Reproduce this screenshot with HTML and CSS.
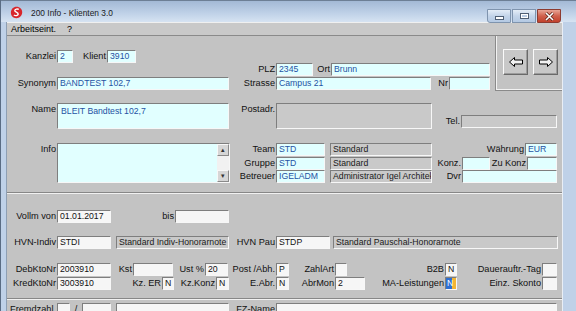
FILE: index.html
```html
<!DOCTYPE html>
<html>
<head>
<meta charset="utf-8">
<title>200 Info - Klienten 3.0</title>
<link rel="stylesheet" href="styles.css">
</head>
<body>
<div class="window">

	<div class="titlebar">
		<svg class="app-icon" width="13" height="13" viewBox="0 0 13 13">
			<path d="M6.5 0.8 C10 0.8 12.4 3.2 12.2 6.6 C12 10 9.4 12.3 6.3 12.2 C3 12.1 0.8 9.8 0.9 6.5 C1 3.2 3.3 0.8 6.5 0.8 Z" fill="#d8262c"/>
			<path d="M8.8 3.4 C7.4 2.6 5 3 4.8 4.6 C4.6 6.2 8.4 6.2 8.2 8.2 C8 9.8 5.4 10.1 3.9 9" fill="none" stroke="#fff" stroke-width="1.4"/>
		</svg>
		<span class="title">200 Info - Klienten 3.0</span>
		<div class="caption-btns">
			<span class="cbtn min"><i></i></span>
			<span class="cbtn max"><i></i></span>
			<span class="cbtn close">
				<svg width="11" height="9" viewBox="0 0 11 9"><path d="M2 1 L9 8 M9 1 L2 8" stroke="#5a2318" stroke-width="3"/><path d="M2 1 L9 8 M9 1 L2 8" stroke="#fff" stroke-width="1.6"/></svg>
			</span>
		</div>
	</div>

	<div class="client">
		<div class="menubar">
			<span>Arbeitseint.</span>
			<span>?</span>
		</div>

		<div class="form">

			<div class="top">
				<div class="top-fields">
					<div class="row">
						<span class="lbl w50">Kanzlei</span>
						<span class="fld cyan w16">2</span>
						<span class="lbl w34">Klient</span>
						<span class="fld cyan w29">3910</span>
					</div>
					<div class="row">
						<span class="lbl w269">PLZ</span>
						<span class="fld cyan w37">2345</span>
						<span class="lbl w18">Ort</span>
						<span class="fld cyan w159">Brunn</span>
					</div>
					<div class="row gap1">
						<span class="lbl w50">Synonym</span>
						<span class="fld cyan w172">BANDTEST 102,7</span>
						<span class="lbl w47">Strasse</span>
						<span class="fld cyan w155">Campus 21</span>
						<span class="lbl w18">Nr</span>
						<span class="fld cyan w41"></span>
					</div>
				</div>
				<div class="nav">
					<span class="nav-btn">
						<svg width="14" height="10" viewBox="0 0 14 10"><path d="M0.5 5 L5.5 0.5 L5.5 3 L13.5 3 L13.5 7 L5.5 7 L5.5 9.5 Z" fill="#f2f2f2" stroke="#000"/></svg>
					</span>
					<span class="nav-btn">
						<svg width="14" height="10" viewBox="0 0 14 10"><path d="M13.5 5 L8.5 0.5 L8.5 3 L0.5 3 L0.5 7 L8.5 7 L8.5 9.5 Z" fill="#f2f2f2" stroke="#000"/></svg>
					</span>
				</div>
			</div>

			<div class="row tall">
				<span class="lbl w50">Name</span>
				<span class="fld cyan w172 big">BLEIT Bandtest 102,7</span>
				<span class="lbl w47">Postadr.</span>
				<span class="fld gray w156 big"></span>
				<span class="lbl w29 low">Tel.</span>
				<span class="fld gray w96 low"></span>
			</div>

			<div class="row info-row">
				<span class="lbl w50">Info</span>
				<div class="fld cyan w173 memo">
					<div class="memo-text"></div>
					<div class="scroll">
						<span class="sbtn">&#9652;</span>
						<span class="track"></span>
						<span class="sbtn">&#9662;</span>
					</div>
				</div>
				<div class="stack">
					<div class="row">
						<span class="lbl w46">Team</span>
						<span class="fld cyan w49">STD</span>
						<span class="fld gray w102 ml5">Standard</span>
						<span class="lbl w93">Währung</span>
						<span class="fld cyan w32">EUR</span>
					</div>
					<div class="row">
						<span class="lbl w46">Gruppe</span>
						<span class="fld cyan w49">STD</span>
						<span class="fld gray w102 ml5">Standard</span>
						<span class="lbl w30">Konz.</span>
						<span class="fld cyan w28"></span>
						<span class="lbl w37">Zu Konz</span>
						<span class="fld cyan w30"></span>
					</div>
					<div class="row">
						<span class="lbl w46">Betreuer</span>
						<span class="fld cyan w49">IGELADM</span>
						<span class="fld gray w102 ml5">Administrator Igel Architekten</span>
						<span class="lbl w30">Dvr</span>
						<span class="fld cyan w95"></span>
					</div>
				</div>
			</div>

			<div class="sep"></div>

			<div class="row vollm">
				<span class="lbl w50">Vollm von</span>
				<span class="fld white w54">01.01.2017</span>
				<span class="lbl w64">bis</span>
				<span class="fld white w54"></span>
			</div>

			<div class="row hvn">
				<span class="lbl w50">HVN-Indiv</span>
				<span class="fld white w54">STDI</span>
				<span class="fld gray w113 ml5">Standard Indiv-Honorarnote</span>
				<span class="lbl w47">HVN Pau</span>
				<span class="fld white w54">STDP</span>
				<span class="fld gray w225 ml3">Standard Pauschal-Honorarnote</span>
			</div>

			<div class="row konto">
				<span class="lbl w50">DebKtoNr</span>
				<span class="fld white w54">2003910</span>
				<span class="lbl w22">Kst</span>
				<span class="fld white w40"></span>
				<span class="lbl w32">Ust %</span>
				<span class="fld white w23">20</span>
				<span class="lbl w48">Post /Abh.</span>
				<span class="fld white w13">P</span>
				<span class="lbl w46">ZahlArt</span>
				<span class="fld white w12"></span>
				<span class="lbl w98">B2B</span>
				<span class="fld white w12">N</span>
				<span class="lbl w85">Dauerauftr.-Tag</span>
				<span class="fld white w15"></span>
			</div>

			<div class="row gap1">
				<span class="lbl w50">KredKtoNr</span>
				<span class="fld white w54">3003910</span>
				<span class="lbl w51">Kz. ER</span>
				<span class="fld white w12">N</span>
				<span class="lbl w42">Kz.Konz</span>
				<span class="fld white w13">N</span>
				<span class="lbl w47">E.Abr.</span>
				<span class="fld white w13">N</span>
				<span class="lbl w46">AbrMon</span>
				<span class="fld white w30">2</span>
				<span class="lbl w80">MA-Leistungen</span>
				<span class="fld sel w12">N</span>
				<span class="lbl w85">Einz. Skonto</span>
				<span class="fld white w15"></span>
			</div>

			<div class="sep sep-low"></div>

			<div class="row fremd">
				<span class="lbl w50">Fremdzahl.</span>
				<span class="fld white w13"></span>
				<span class="lbl w12 mid">/</span>
				<span class="fld white w29"></span>
				<span class="fld white w113 ml5"></span>
				<span class="lbl w47">FZ-Name</span>
				<span class="fld white w281"></span>
			</div>

		</div>
	</div>
</div>
</body>
</html>
```

FILE: styles.css
```css
body {
	margin: 0;
	font-family: "Liberation Sans", Arial, sans-serif;
	color: #000;
}
.window {
	width: 576px;
	height: 311px;
	box-sizing: border-box;
	overflow: hidden;
	background: #bfd1e8;
	border-left: 1px solid #5a6c83;
}

/* title bar */
.titlebar {
	height: 22px;
	display: flex;
	align-items: center;
	padding: 2px 0 0 9px;
	box-sizing: border-box;
	border-top: 1px solid #6d7f95;
	background: linear-gradient(#a3b9d5, #c0d2e8 60%, #d6e3f2);
}
.app-icon { flex: none; }
.title {
	margin-left: 8px;
	font-size: 8.4px;
	color: #1b1b1b;
}
.caption-btns {
	display: flex;
	margin-left: auto;
	margin-right: 15px;
	align-self: flex-start;
	margin-top: 6px;
}
.cbtn {
	width: 22px;
	height: 12px;
	display: flex;
	align-items: center;
	justify-content: center;
	border: 1px solid #7f94ae;
	background: linear-gradient(#e4edf7, #c3d4e9 50%, #b4c9e3);
}
.cbtn + .cbtn { margin-left: 1px; }
.cbtn.min { border-radius: 0 0 0 3px; }
.cbtn.min i {
	width: 7px;
	height: 2px;
	margin-top: 4px;
	background: #fff;
	border: 1px solid #4f5f74;
}
.cbtn.max i {
	width: 7px;
	height: 4px;
	border: 1px solid #4f5f74;
	box-shadow: inset 0 0 0 1px #fff;
	background: #b9cce4;
}
.cbtn.close {
	width: 22px;
	border-color: #8d3b30;
	border-radius: 0 0 3px 0;
	background: linear-gradient(#e8a596, #d0604c 50%, #c2412c);
}

/* client area */
.client {
	margin: 0 13px 0 5px;
	border-left: 1px solid #8e9fb3;
	border-right: 1px solid #e9eef5;
	height: 289px;
	background: #c3c3c3;
}
.menubar {
	height: 12px;
	border-top: 1px solid #f0f0f0;
	border-bottom: 1px solid #8a8a8a;
	background: #c9c9c9;
	display: flex;
	gap: 11px;
	padding-left: 4px;
	font-size: 9px;
	line-height: 12px;
}

/* form */
.form { width: 555px; }
.row {
	display: flex;
	height: 13px;
	align-items: flex-start;
}
.gap1 { margin-top: 1px; }
.lbl {
	flex: none;
	box-sizing: border-box;
	text-align: right;
	padding-right: 1px;
	font-size: 9.2px;
	line-height: 13px;
	white-space: nowrap;
	color: #111;
}
.lbl.mid { text-align: center; padding: 0; }
.fld {
	flex: none;
	height: 13px;
	box-sizing: border-box;
	border: 1px solid;
	border-color: #7e7e7e #f7f7f7 #f7f7f7 #7e7e7e;
	padding: 0 2px;
	font-size: 8.7px;
	line-height: 11px;
	white-space: nowrap;
	overflow: hidden;
}
.cyan { background: #e1ffff; color: #1f52a3; }
.white { background: #f6f6f6; color: #111; }
.gray { background: #c9c9c9; color: #1a1a1a; }
.sel {
	background: linear-gradient(to right, #2d6fd2 62%, #f2b535 62%);
	color: #fff;
	padding: 0 1px;
}
.ml5 { margin-left: 5px; }
.ml3 { margin-left: 3px; }

.top {
	display: flex;
	height: 55px;
}
.top-fields {
	width: 488px;
	padding-top: 14px;
	box-sizing: border-box;
}
.nav {
	width: 67px;
	box-sizing: border-box;
	border-left: 1px solid #8a8a8a;
	border-bottom: 1px solid #8a8a8a;
	box-shadow: inset 1px 0 #f2f2f2, inset 0 -1px #f2f2f2;
	display: flex;
	gap: 5px;
	padding: 13px 0 0 7px;
	align-items: flex-start;
}
.nav-btn {
	width: 25px;
	height: 26px;
	box-sizing: border-box;
	display: flex;
	align-items: center;
	justify-content: center;
	background: #c8c8c8;
	border: 1px solid;
	border-color: #fafafa #6a6a6a #6a6a6a #fafafa;
	box-shadow: inset -1px -1px #9c9c9c;
}

.tall {
	height: 26px;
	margin-top: 12px;
}
.big {
	height: 26px;
	line-height: 13px;
	padding: 1px 3px;
}
.low {
	align-self: flex-end;
	margin-bottom: 1px;
}

.info-row {
	height: 40px;
	margin-top: 14px;
}
.memo {
	height: 40px;
	display: flex;
	padding: 0;
}
.memo-text { flex: 1; }
.scroll {
	width: 12px;
	display: flex;
	flex-direction: column;
}
.sbtn {
	height: 12px;
	box-sizing: border-box;
	background: #d6d6d6;
	border: 1px solid;
	border-color: #f8f8f8 #8a8a8a #8a8a8a #f8f8f8;
	font-size: 7px;
	line-height: 10px;
	text-align: center;
	color: #333;
}
.track {
	flex: 1;
	background: #f1f1f1;
}
.stack .row + .row { height: 13px; }
.stack .row:first-child { height: 14px; }

.sep {
	margin-top: 9px;
	border-top: 1px solid #878787;
	border-bottom: 1px solid #f1f1f1;
}
.sep-low { margin-top: 8px; }

.vollm { margin-top: 16px; }
.hvn { margin-top: 13px; }
.konto { margin-top: 14px; }
.fremd { margin-top: 3px; }

.w12 { width: 12px; }
.w13 { width: 13px; }
.w15 { width: 15px; }
.w16 { width: 16px; }
.w18 { width: 18px; }
.w22 { width: 22px; }
.w23 { width: 23px; }
.w28 { width: 28px; }
.w29 { width: 29px; }
.w30 { width: 30px; }
.w32 { width: 32px; }
.w34 { width: 34px; }
.w37 { width: 37px; }
.w40 { width: 40px; }
.w41 { width: 41px; }
.w42 { width: 42px; }
.w46 { width: 46px; }
.w47 { width: 47px; }
.w48 { width: 48px; }
.w49 { width: 49px; }
.w50 { width: 50px; }
.w51 { width: 51px; }
.w54 { width: 54px; }
.w64 { width: 64px; }
.w80 { width: 80px; }
.w85 { width: 85px; }
.w93 { width: 93px; }
.w95 { width: 95px; }
.w96 { width: 96px; }
.w98 { width: 98px; }
.w102 { width: 102px; }
.w113 { width: 113px; }
.w155 { width: 155px; }
.w156 { width: 156px; }
.w159 { width: 159px; }
.w172 { width: 172px; }
.w173 { width: 173px; }
.w225 { width: 225px; }
.w269 { width: 269px; }
.w281 { width: 281px; }
```
